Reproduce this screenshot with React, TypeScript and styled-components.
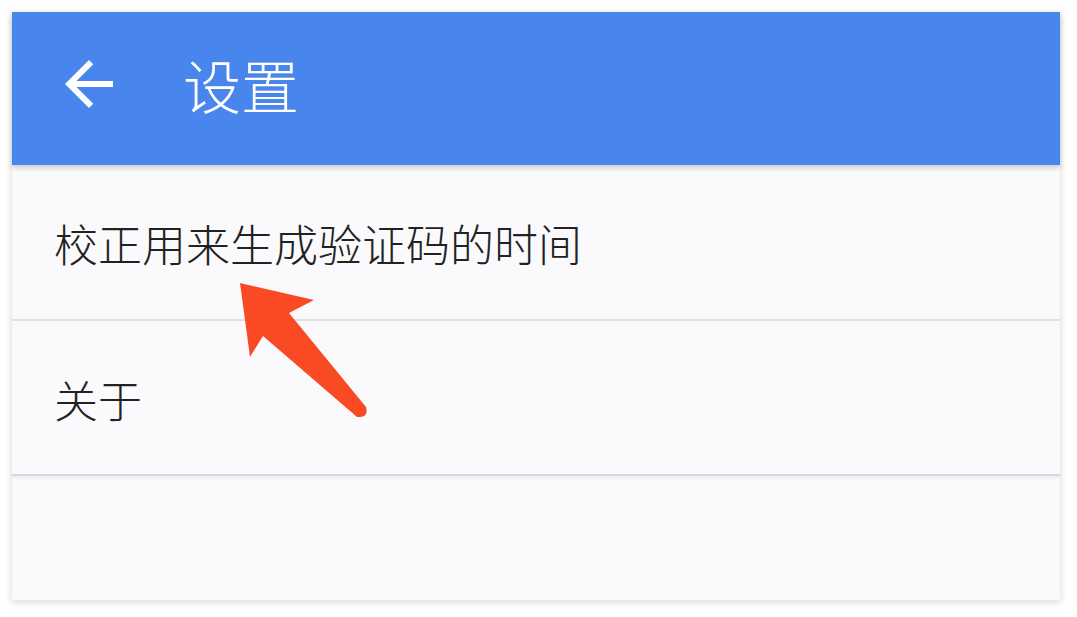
import React from "react";
import styled, { createGlobalStyle } from "styled-components";

const Global = createGlobalStyle`
  html, body { margin: 0; padding: 0; background: #ffffff; }
  body { font-family: "Noto Sans CJK SC", "Noto Sans", sans-serif; }
`;

const Page = styled.div`
  width: 1077px;
  height: 617px;
  box-sizing: border-box;
  padding: 12px 17px 17px 12px;
  background: #ffffff;
`;

const Card = styled.div`
  position: relative;
  width: 1048px;
  height: 588px;
  display: flex;
  flex-direction: column;
  background: #faf9fb;
  box-shadow: 0 2px 8px rgba(0, 0, 0, 0.16);
`;

const Header = styled.header`
  position: relative;
  z-index: 1;
  height: 153px;
  flex: none;
  display: flex;
  align-items: center;
  box-sizing: border-box;
  padding: 0 0 9px 41px;
  background: #4886ee;
  box-shadow: 0 3px 5px rgba(0, 0, 0, 0.18);
`;

const BackIcon = styled.svg`
  width: 72px;
  height: 72px;
  flex: none;
  fill: #ffffff;
`;

const Title = styled.h1`
  margin: 0 0 0 58px;
  font-size: 58px;
  font-weight: 300;
  line-height: 1;
  color: #ffffff;
`;

const List = styled.div`
  display: flex;
  flex-direction: column;
`;

const Row = styled.div<{ $last?: boolean }>`
  height: ${(p) => (p.$last ? 155 : 156)}px;
  box-sizing: border-box;
  display: flex;
  align-items: center;
  padding: 2px 0 0 42px;
  font-size: 44px;
  font-weight: 300;
  line-height: 1;
  color: #222222;
  border-bottom: 2px solid ${(p) => (p.$last ? "#d9d8dc" : "#e0dfe2")};
  box-shadow: ${(p) => (p.$last ? "0 2px 3px rgba(0,0,0,0.06)" : "none")};
`;

const Overlay = styled.svg`
  position: absolute;
  left: 0;
  top: 0;
  width: 1048px;
  height: 588px;
  pointer-events: none;
  z-index: 2;
`;

export default function App() {
  return (
    <>
      <Global />
      <Page>
        <Card>
          <Header>
            <BackIcon viewBox="0 0 24 24">
              <path d="M20 11H7.83l5.59-5.59L12 4l-8 8 8 8 1.41-1.41L7.83 13H20v-2z" />
            </BackIcon>
            <Title>设置</Title>
          </Header>
          <List>
            <Row>校正用来生成验证码的时间</Row>
            <Row $last>关于</Row>
          </List>
          <Overlay viewBox="12 12 1048 588">
            <path
              d="M240 283 L314 300 L289 313 L366 407 Q369 418 357 417 L263 336 L250 357 Z"
              fill="#fa4a24"
            />
          </Overlay>
        </Card>
      </Page>
    </>
  );
}
